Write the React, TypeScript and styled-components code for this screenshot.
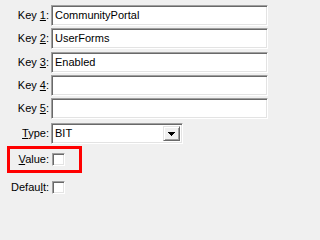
import styled, { createGlobalStyle } from "styled-components";

const GlobalStyle = createGlobalStyle`
  html, body {
    margin: 0;
    padding: 0;
    background: #f0f0f0;
  }
  body {
    font-family: "Liberation Sans", Arial, sans-serif;
    font-size: 11px;
    color: #000;
  }
`;

const keys = ["CommunityPortal", "UserForms", "Enabled", "", ""];
const keyGaps = [0, 2, 3, 2, 2];

const App = () => {
  return (
    <>
      <GlobalStyle />
      <Form>
        {keys.map((value, i) => (
          <FieldRow key={i} $top={keyGaps[i]}>
            <Label>
              Key <u>{i + 1}</u>:
            </Label>
            <TextBox>{value}</TextBox>
          </FieldRow>
        ))}
        <FieldRow $top={4}>
          <Label>
            <u>T</u>ype:
          </Label>
          <Select>
            <SelectText>BIT</SelectText>
            <DropButton>
              <svg width="7" height="4" viewBox="0 0 7 4">
                <path d="M0 0h7v1H6v1H5v1H4v1H3V3H2V2H1V1H0z" fill="#000" />
              </svg>
            </DropButton>
          </Select>
        </FieldRow>
        <Highlight>
          <Label $width={39}>
            <u>V</u>alue:
          </Label>
          <CheckBox />
        </Highlight>
        <FieldRow $top={4}>
          <Label>
            Defau<u>l</u>t:
          </Label>
          <CheckBox />
        </FieldRow>
      </Form>
    </>
  );
};

export default App;

const Form = styled.div`
  display: flex;
  flex-direction: column;
  padding: 5px 6px 0 0;
  width: 274px;
  box-sizing: border-box;
`;

const FieldRow = styled.div<{ $top?: number }>`
  display: flex;
  align-items: center;
  height: 21px;
  margin-top: ${(p) => p.$top ?? 0}px;
`;

const Label = styled.div<{ $width?: number }>`
  width: ${(p) => p.$width ?? 49}px;
  flex-shrink: 0;
  text-align: right;
  white-space: nowrap;
  line-height: 13px;

  u {
    text-decoration-thickness: 1px;
    text-underline-offset: 1px;
  }
`;

const sunken = `
  box-sizing: border-box;
  background: #fff;
  border-style: solid;
  border-width: 1px;
  border-color: #a0a0a0 #fff #fff #a0a0a0;
  box-shadow: inset 1px 1px 0 #696969, inset -1px -1px 0 #e3e3e3;
`;

const TextBox = styled.div`
  ${sunken}
  flex: 1;
  margin-left: 2px;
  height: 21px;
  padding: 3px 3px 0 3px;
  line-height: 13px;
  white-space: nowrap;
  overflow: hidden;
`;

const Select = styled.div`
  ${sunken}
  display: flex;
  align-items: stretch;
  width: 132px;
  margin-left: 2px;
  height: 21px;
  padding: 2px;
`;

const SelectText = styled.div`
  flex: 1;
  padding: 1px 0 0 1px;
  line-height: 13px;
`;

const DropButton = styled.div`
  box-sizing: border-box;
  width: 17px;
  display: flex;
  align-items: center;
  justify-content: center;
  background: #f0f0f0;
  border-style: solid;
  border-width: 1px;
  border-color: #e3e3e3 #696969 #696969 #e3e3e3;
  box-shadow: inset 1px 1px 0 #fff, inset -1px -1px 0 #a0a0a0;
  padding-top: 1px;
`;

const Highlight = styled.div`
  display: flex;
  align-items: center;
  align-self: flex-start;
  height: 21px;
  margin: 2px 0 0 7px;
  padding-right: 14px;
  border: 3px solid #f00;
`;

const CheckBox = styled.div`
  ${sunken}
  width: 13px;
  height: 13px;
  margin-left: 3px;
  flex-shrink: 0;
`;
